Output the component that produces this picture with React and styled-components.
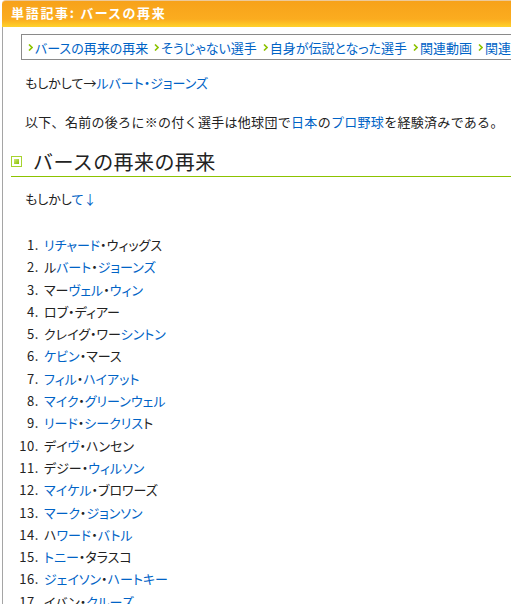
import React from 'react';
import styled, { createGlobalStyle } from 'styled-components';

const Global = createGlobalStyle`
  html, body { margin: 0; padding: 0; overflow: hidden; background: #fff; }
  body {
    font-family: "Noto Sans CJK JP", "Noto Sans", sans-serif;
    font-size: 13px;
    color: #222;
  }
`;

const Page = styled.div`
  margin-left: 2px;
  width: 509px;
  overflow: hidden;
`;

const Header = styled.div`
  height: 26px;
  border-top: 1px solid #ecc99a;
  border-radius: 4px 0 0 0;
  background: linear-gradient(to bottom, #f7a21a 0%, #fbac1f 70%, #ffd22b 100%);
  color: #fff;
  font-weight: bold;
  font-size: 13px;
  letter-spacing: 1.7px;
  line-height: 24px;
  padding-left: 9px;
  white-space: nowrap;
  font-feature-settings: "palt";
`;

const Content = styled.div`
  border-left: 1px solid #a5a5a5;
  padding: 7px 0 0 0;
  min-height: 620px;
`;

const Crumbs = styled.div`
  margin-left: 18px;
  height: 24px;
  border: 1px solid #8a8a8a;
  border-right: none;
  display: flex;
  align-items: center;
  gap: 6px;
  padding-left: 6px;
  white-space: nowrap;
  overflow: hidden;
  font-feature-settings: "palt";
`;

const Crumb = styled.a`
  display: flex;
  align-items: center;
  gap: 2px;
  color: #0063c6;
  text-decoration: none;
  font-size: 13px;
  flex-shrink: 0;
`;

const Arrow = () => (
  <svg width="5" height="7" viewBox="0 0 5 7">
    <path d="M1 0.5 L4 3.5 L1 6.5" fill="none" stroke="#8cc300" strokeWidth="1.6" />
  </svg>
);

const Body = styled.div`
  padding-left: 22px;
`;

const P = styled.p`
  margin: ${(p) => p.$mt || 0}px 0 0 0;
  line-height: 22px;
  white-space: nowrap;
  letter-spacing: ${(p) => (p.$prop ? '0' : '0.3px')};
  font-feature-settings: ${(p) => (p.$prop ? '"palt"' : 'normal')};
`;

const A = styled.a`
  color: #0063c6;
  text-decoration: none;
`;

const H2 = styled.h2`
  margin: 15px 0 0 8px;
  height: 28px;
  border-bottom: 1px solid #8cc300;
  display: flex;
  align-items: center;
  gap: 11px;
  font-size: 20px;
  font-weight: normal;
  letter-spacing: 0.4px;
  color: #222;
  line-height: 28px;
  white-space: nowrap;
`;

const Box = styled.span`
  width: 9px;
  height: 9px;
  border: 1px solid #a6d42e;
  display: flex;
  align-items: center;
  justify-content: center;
  flex-shrink: 0;
  margin-top: -1px;
  &::after {
    content: "";
    width: 5px;
    height: 5px;
    background: linear-gradient(135deg, #cde97a, #88c000);
  }
`;

const List = styled.ol`
  list-style: none;
  margin: 24px 0 0 0;
  padding: 0;
  font-feature-settings: "palt";
`;

const Item = styled.li`
  display: flex;
  line-height: 22.3px;
  white-space: nowrap;
`;

const Num = styled.span`
  width: 36px;
  text-align: right;
  margin-right: 5px;
  margin-left: -22px;
  flex-shrink: 0;
  letter-spacing: 0.6px;
  font-variant-numeric: tabular-nums;
  color: #222;
`;

const items = [
  [['リチャード', 1], ['・ウィッグス', 0]],
  [['ル', 0], ['バート', 1], ['・', 0], ['ジョーンズ', 1]],
  [['マー', 0], ['ヴェル', 1], ['・', 0], ['ウィン', 1]],
  [['ロブ・ディアー', 0]],
  [['クレイグ・ワー', 0], ['シントン', 1]],
  [['ケビン', 1], ['・マース', 0]],
  [['フィル', 1], ['・', 0], ['ハイアット', 1]],
  [['マイク', 1], ['・', 0], ['グリーンウェル', 1]],
  [['リード', 1], ['・', 0], ['シークリス', 1], ['ト', 0]],
  [['デイ', 0], ['ヴ', 1], ['・ハンセン', 0]],
  [['デジー・', 0], ['ウィルソン', 1]],
  [['マイケル', 1], ['・ブロワーズ', 0]],
  [['マーク', 1], ['・', 0], ['ジョンソン', 1]],
  [['ハ', 0], ['ワード', 1], ['・', 0], ['バトル', 1]],
  [['トニー', 1], ['・タラスコ', 0]],
  [['ジェイソン', 1], ['・', 0], ['ハートキー', 1]],
  [['イバン・', 0], ['クルーズ', 1]],
];

const crumbs = ['バースの再来の再来', 'そうじゃない選手', '自身が伝説となった選手', '関連動画', '関連項目'];

export default function App() {
  return (
    <>
      <Global />
      <Page>
        <Header>単語記事: バースの再来</Header>
        <Content>
          <Crumbs>
            {crumbs.map((c) => (
              <Crumb key={c} href="#">
                <Arrow />
                {c}
              </Crumb>
            ))}
          </Crumbs>
          <Body>
            <P $mt={12} $prop>
              もしかして→<A href="#">ルバート・ジョーンズ</A>
            </P>
            <P $mt={17}>
              以下、名前の後ろに※の付く選手は他球団で<A href="#">日本</A>の<A href="#">プロ野球</A>を経験済みである。
            </P>
          </Body>
          <H2>
            <Box />
            バースの再来の再来
          </H2>
          <Body>
            <P $mt={11} $prop>
              もしかし<A href="#">て↓</A>
            </P>
            <List>
              {items.map((parts, i) => (
                <Item key={i}>
                  <Num>{i + 1}.</Num>
                  <span>
                    {parts.map(([t, l], j) =>
                      l ? <A key={j} href="#">{t}</A> : <span key={j}>{t}</span>
                    )}
                  </span>
                </Item>
              ))}
            </List>
          </Body>
        </Content>
      </Page>
    </>
  );
}
